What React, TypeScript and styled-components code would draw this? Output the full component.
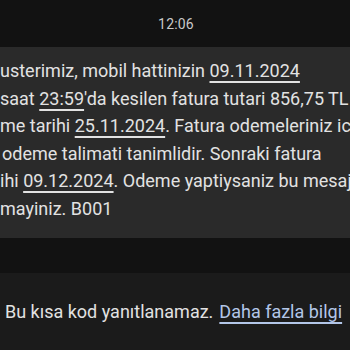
import React from "react";
import styled, { createGlobalStyle } from "styled-components";

const Global = createGlobalStyle`
  html, body { margin: 0; padding: 0; background: #121212; }
  body { font-family: Roboto, "Noto Sans", sans-serif; overflow: hidden; }
`;

const Screen = styled.div`
  width: 350px;
  height: 350px;
  display: flex;
  flex-direction: column;
  background: #121212;
  overflow: hidden;
`;

const TimeBar = styled.div`
  height: 47px;
  display: flex;
  align-items: center;
  justify-content: center;
  padding-left: 2px;
  color: #c9c9c9;
  font-size: 14px;
  letter-spacing: 0.2px;
`;

const Bubble = styled.div`
  background: #2a2a2a;
  padding: 10px 0 15px 0;
  display: flex;
  flex-direction: column;
`;

const Line = styled.div<{ $indent?: number }>`
  white-space: nowrap;
  color: #e2e2e2;
  font-size: 18px;
  line-height: 27.6px;
  padding-left: ${(p) => p.$indent ?? 0}px;
`;

const U = styled.span`
  text-decoration: underline;
  text-underline-offset: 4px;
  text-decoration-thickness: 1.5px;
`;

const Gap = styled.div`
  height: 35px;
  flex: none;
`;

const Footer = styled.div`
  flex: 1;
  background: #1b1b1b;
  display: flex;
  align-items: center;
  padding: 0 0 0 5px;
  color: #e2e2e2;
  font-size: 18px;
  white-space: nowrap;
`;

const Link = styled.span`
  color: #b3c6e8;
  text-decoration: underline;
  text-underline-offset: 4px;
  text-decoration-thickness: 1.5px;
  margin-left: 6px;
`;

export default function App() {
  return (
    <Screen>
      <Global />
      <TimeBar>12:06</TimeBar>
      <Bubble>
        <Line>usterimiz, mobil hattinizin <U>09.11.2024</U></Line>
        <Line>saat <U>23:59</U>'da kesilen fatura tutari 856,75 TL</Line>
        <Line>me tarihi <U>25.11.2024</U>. Fatura odemeleriniz icin</Line>
        <Line $indent={2}>odeme talimati tanimlidir. Sonraki fatura</Line>
        <Line>ihi <U>09.12.2024</U>. Odeme yaptiysaniz bu mesaj</Line>
        <Line>mayiniz. B001</Line>
      </Bubble>
      <Gap />
      <Footer>
        Bu kısa kod yanıtlanamaz.<Link>Daha fazla bilgi</Link>
      </Footer>
    </Screen>
  );
}
